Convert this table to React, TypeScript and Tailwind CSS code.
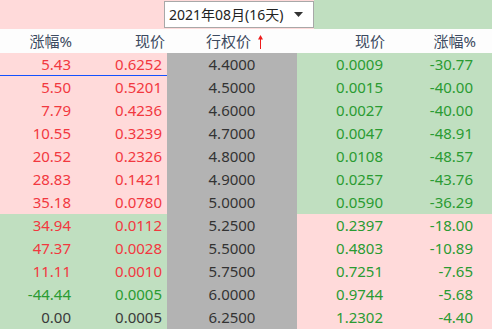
type Tone = "red" | "green" | "dark";

type Row = {
  lChg: string;
  lChgTone: Tone;
  lPrice: string;
  lPriceTone: Tone;
  strike: string;
  rPrice: string;
  rChg: string;
  leftBg: "pink" | "green";
};

const rows: Row[] = [
  { lChg: "5.43", lChgTone: "red", lPrice: "0.6252", lPriceTone: "red", strike: "4.4000", rPrice: "0.0009", rChg: "-30.77", leftBg: "pink" },
  { lChg: "5.50", lChgTone: "red", lPrice: "0.5201", lPriceTone: "red", strike: "4.5000", rPrice: "0.0015", rChg: "-40.00", leftBg: "pink" },
  { lChg: "7.79", lChgTone: "red", lPrice: "0.4236", lPriceTone: "red", strike: "4.6000", rPrice: "0.0027", rChg: "-40.00", leftBg: "pink" },
  { lChg: "10.55", lChgTone: "red", lPrice: "0.3239", lPriceTone: "red", strike: "4.7000", rPrice: "0.0047", rChg: "-48.91", leftBg: "pink" },
  { lChg: "20.52", lChgTone: "red", lPrice: "0.2326", lPriceTone: "red", strike: "4.8000", rPrice: "0.0108", rChg: "-48.57", leftBg: "pink" },
  { lChg: "28.83", lChgTone: "red", lPrice: "0.1421", lPriceTone: "red", strike: "4.9000", rPrice: "0.0257", rChg: "-43.76", leftBg: "pink" },
  { lChg: "35.18", lChgTone: "red", lPrice: "0.0780", lPriceTone: "red", strike: "5.0000", rPrice: "0.0590", rChg: "-36.29", leftBg: "pink" },
  { lChg: "34.94", lChgTone: "red", lPrice: "0.0112", lPriceTone: "red", strike: "5.2500", rPrice: "0.2397", rChg: "-18.00", leftBg: "green" },
  { lChg: "47.37", lChgTone: "red", lPrice: "0.0028", lPriceTone: "red", strike: "5.5000", rPrice: "0.4803", rChg: "-10.89", leftBg: "green" },
  { lChg: "11.11", lChgTone: "red", lPrice: "0.0010", lPriceTone: "red", strike: "5.7500", rPrice: "0.7251", rChg: "-7.65", leftBg: "green" },
  { lChg: "-44.44", lChgTone: "green", lPrice: "0.0005", lPriceTone: "green", strike: "6.0000", rPrice: "0.9744", rChg: "-5.68", leftBg: "green" },
  { lChg: "0.00", lChgTone: "dark", lPrice: "0.0005", lPriceTone: "dark", strike: "6.2500", rPrice: "1.2302", rChg: "-4.40", leftBg: "green" },
];

const toneClass = {
  red: "text-[#f2383f]",
  green: "text-[#2a9b32]",
  dark: "text-[#3a3a3a]",
};

export default function App() {
  return (
    <div
      className="w-[492px] h-[330px] overflow-hidden bg-white text-[15px] leading-none"
      style={{ fontFamily: '"Noto Sans", "Noto Sans CJK SC", sans-serif' }}
    >
      {/* top bar with month picker */}
      <div className="grid h-[29px] grid-cols-[164px_150px_1fr]">
        <div className="bg-[#ffdada]" />
        <div className="flex items-start bg-[#ffdada]">
          <div className="mt-px flex h-[27px] w-full items-center justify-between border border-[#a8a8a8] bg-white pl-1 pr-[10px] text-[14px] text-[#222]">
            <span>2021年08月(16天)</span>
            <svg width="9" height="5" viewBox="0 0 9 5">
              <path d="M0 0 L9 0 L4.5 5 Z" fill="#333" />
            </svg>
          </div>
        </div>
        <div className="bg-[#c0dfc0]" />
      </div>

      {/* header */}
      <div className="grid h-[24px] grid-cols-[97px_70px_130px_103px_92px] items-center bg-[#fdfdfd] text-[#3c4a60]">
        <div className="pr-[25px] text-right">涨幅%</div>
        <div className="pr-[2px] text-right">现价</div>
        <div className="flex items-center justify-center gap-[6px] pl-[6px]">
          <span>行权价</span>
          <svg width="7" height="15" viewBox="0 0 7 15">
            <path d="M3.5 1 L6 5.5 L4 5.5 L4 15 L3 15 L3 5.5 L1 5.5 Z" fill="#ee1c1c" />
          </svg>
        </div>
        <div className="pr-[15px] text-right">现价</div>
        <div className="pr-[16px] text-right">涨幅%</div>
      </div>

      {/* rows */}
      {rows.map((r, i) => {
        const leftBg = r.leftBg === "pink" ? "bg-[#ffdada]" : "bg-[#c0dfc0]";
        const rightBg = r.leftBg === "pink" ? "bg-[#c0dfc0]" : "bg-[#ffdada]";
        const line = i === 0 ? "border-b border-[#1452ff]" : "";
        return (
          <div key={r.strike} className="grid h-[23px] grid-cols-[97px_70px_130px_103px_92px]">
            <div className={`${leftBg} ${line} flex items-center justify-end pr-[26px] ${toneClass[r.lChgTone]}`}>
              {r.lChg}
            </div>
            <div className={`${leftBg} ${line} flex items-center justify-end pr-[5px] ${toneClass[r.lPriceTone]}`}>
              {r.lPrice}
            </div>
            <div className="flex items-center justify-center bg-[#b3b3b3] text-[#333]">{r.strike}</div>
            <div className={`${rightBg} flex items-center justify-end pr-[17px] text-[#2a9b32]`}>{r.rPrice}</div>
            <div className={`${rightBg} flex items-center justify-end pr-[19px] text-[#2a9b32]`}>{r.rChg}</div>
          </div>
        );
      })}
    </div>
  );
}
